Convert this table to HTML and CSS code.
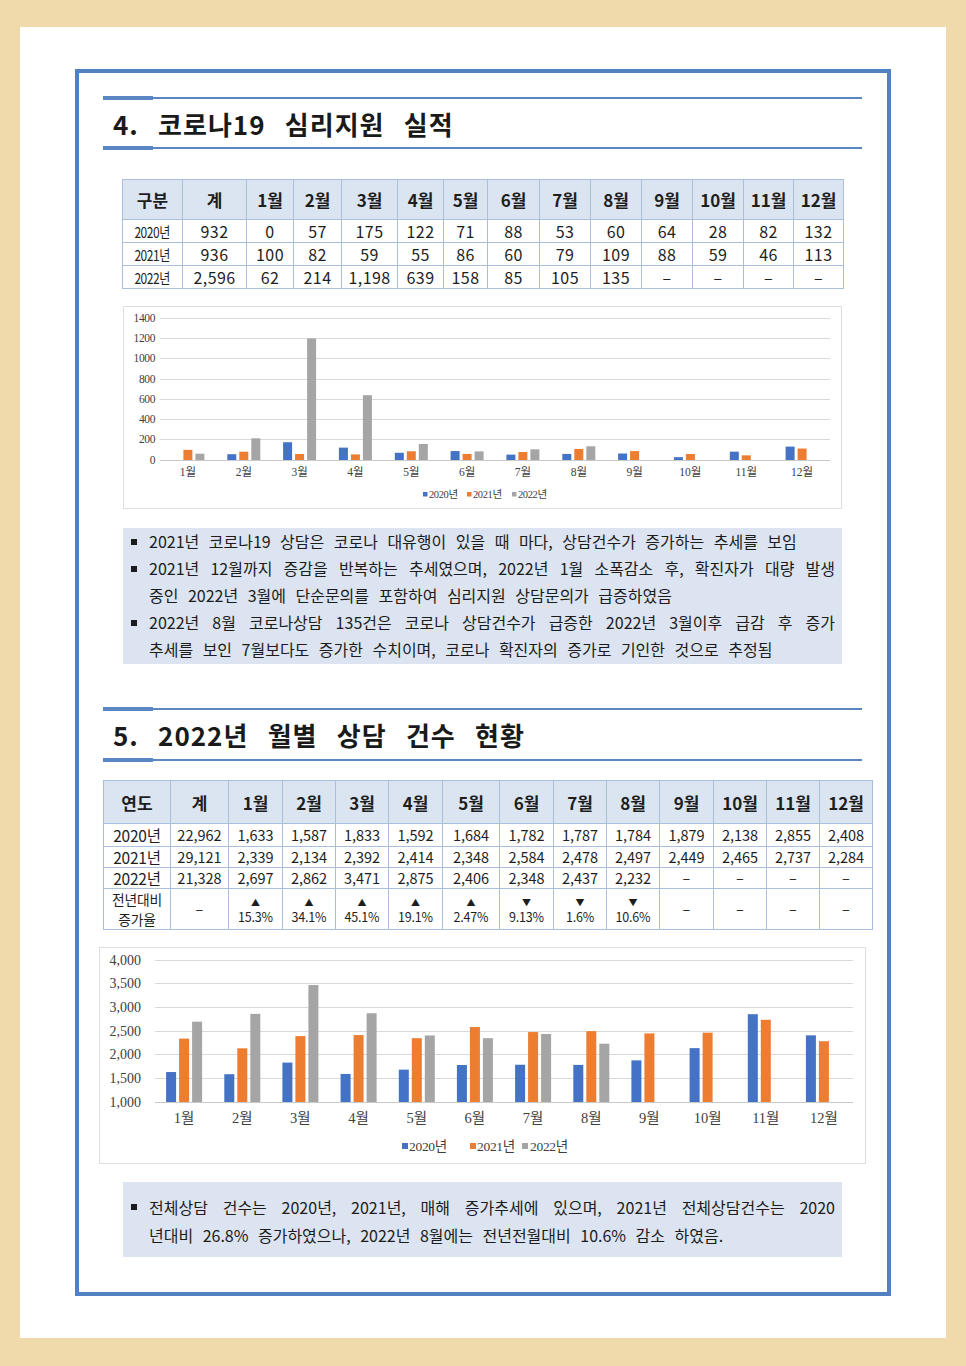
FILE: index.html
```html
<!DOCTYPE html>
<html lang="ko">
<head>
<meta charset="utf-8">
<title>코로나19 심리지원 실적</title>
<link rel="stylesheet" href="styles.css">
</head>
<body>
<div class="page">
<div class="frame">

  <section class="sec-head">
    <div class="rule"><span class="thick"></span><span class="thin"></span></div>
    <h2 class="title">4. 코로나19 심리지원 실적</h2>
    <div class="rule"><span class="thick"></span><span class="thin"></span></div>
  </section>

  <table class="tbl t1">
    <colgroup>
      <col class="w60"><col class="w64"><col class="w47"><col class="w48"><col class="w56"><col class="w46"><col class="w44">
      <col class="w52"><col class="w51"><col class="w51"><col class="w51"><col class="w51"><col class="w50"><col class="w50">
    </colgroup>
    <tr><th>구분</th><th>계</th><th>1월</th><th>2월</th><th>3월</th><th>4월</th><th>5월</th><th>6월</th><th>7월</th><th>8월</th><th>9월</th><th>10월</th><th>11월</th><th>12월</th></tr>
    <tr><td class="yr"><span>2020년</span></td><td>932</td><td>0</td><td>57</td><td>175</td><td>122</td><td>71</td><td>88</td><td>53</td><td>60</td><td>64</td><td>28</td><td>82</td><td>132</td></tr>
    <tr><td class="yr"><span>2021년</span></td><td>936</td><td>100</td><td>82</td><td>59</td><td>55</td><td>86</td><td>60</td><td>79</td><td>109</td><td>88</td><td>59</td><td>46</td><td>113</td></tr>
    <tr><td class="yr"><span>2022년</span></td><td>2,596</td><td>62</td><td>214</td><td>1,198</td><td>639</td><td>158</td><td>85</td><td>105</td><td>135</td><td>–</td><td>–</td><td>–</td><td>–</td></tr>
  </table>

  <div class="chart chart1">
    <svg width="717" height="201" viewBox="0 0 717 201">
      <g class="grid">
        <line x1="36" x2="706" y1="11.5" y2="11.5"/>
        <line x1="36" x2="706" y1="31.5" y2="31.5"/>
        <line x1="36" x2="706" y1="51.5" y2="51.5"/>
        <line x1="36" x2="706" y1="72.5" y2="72.5"/>
        <line x1="36" x2="706" y1="92.5" y2="92.5"/>
        <line x1="36" x2="706" y1="112.5" y2="112.5"/>
        <line x1="36" x2="706" y1="132.5" y2="132.5"/>
        <line class="axis" x1="36" x2="706" y1="153.5" y2="153.5"/>
      </g>
      <g class="ylab c1y">
        <text x="31" y="15">1400</text>
        <text x="31" y="35">1200</text>
        <text x="31" y="55">1000</text>
        <text x="31" y="76">800</text>
        <text x="31" y="96">600</text>
        <text x="31" y="116">400</text>
        <text x="31" y="136">200</text>
        <text x="31" y="157">0</text>
      </g>
      <g transform="matrix(1 0 0 -0.10143 0 153)">
        <g class="s20">
          <rect x="47.4" y="0" width="9" height="0"/>
          <rect x="103.3" y="0" width="9" height="57"/>
          <rect x="159.1" y="0" width="9" height="175"/>
          <rect x="214.9" y="0" width="9" height="122"/>
          <rect x="270.8" y="0" width="9" height="71"/>
          <rect x="326.6" y="0" width="9" height="88"/>
          <rect x="382.4" y="0" width="9" height="53"/>
          <rect x="438.3" y="0" width="9" height="60"/>
          <rect x="494.1" y="0" width="9" height="64"/>
          <rect x="549.9" y="0" width="9" height="28"/>
          <rect x="605.8" y="0" width="9" height="82"/>
          <rect x="661.6" y="0" width="9" height="132"/>
        </g>
        <g class="s21">
          <rect x="59.4" y="0" width="9" height="100"/>
          <rect x="115.3" y="0" width="9" height="82"/>
          <rect x="171.1" y="0" width="9" height="59"/>
          <rect x="226.9" y="0" width="9" height="55"/>
          <rect x="282.8" y="0" width="9" height="86"/>
          <rect x="338.6" y="0" width="9" height="60"/>
          <rect x="394.4" y="0" width="9" height="79"/>
          <rect x="450.3" y="0" width="9" height="109"/>
          <rect x="506.1" y="0" width="9" height="88"/>
          <rect x="561.9" y="0" width="9" height="59"/>
          <rect x="617.8" y="0" width="9" height="46"/>
          <rect x="673.6" y="0" width="9" height="113"/>
        </g>
        <g class="s22">
          <rect x="71.4" y="0" width="9" height="62"/>
          <rect x="127.3" y="0" width="9" height="214"/>
          <rect x="183.1" y="0" width="9" height="1198"/>
          <rect x="238.9" y="0" width="9" height="639"/>
          <rect x="294.8" y="0" width="9" height="158"/>
          <rect x="350.6" y="0" width="9" height="85"/>
          <rect x="406.4" y="0" width="9" height="105"/>
          <rect x="462.3" y="0" width="9" height="135"/>
        </g>
      </g>
      <g class="xlab c1x">
        <text x="63.9" y="169">1월</text>
        <text x="119.8" y="169">2월</text>
        <text x="175.6" y="169">3월</text>
        <text x="231.4" y="169">4월</text>
        <text x="287.3" y="169">5월</text>
        <text x="343.1" y="169">6월</text>
        <text x="398.9" y="169">7월</text>
        <text x="454.8" y="169">8월</text>
        <text x="510.6" y="169">9월</text>
        <text x="566.4" y="169">10월</text>
        <text x="622.3" y="169">11월</text>
        <text x="678.1" y="169">12월</text>
      </g>
      <g class="legend c1l">
        <rect class="b" x="299" y="185" width="4.5" height="4.5"/>
        <text x="305" y="191">2020년</text>
        <rect class="o" x="343" y="185" width="4.5" height="4.5"/>
        <text x="349" y="191">2021년</text>
        <rect class="g" x="388" y="185" width="4.5" height="4.5"/>
        <text x="394" y="191">2022년</text>
      </g>
    </svg>
  </div>

  <div class="note note1">
    <div class="item">
      <span class="sq"></span>
      <div class="txt"><div class="ln">2021년 코로나19 상담은 코로나 대유행이 있을 때 마다, 상담건수가 증가하는 추세를 보임</div></div>
    </div>
    <div class="item">
      <span class="sq"></span>
      <div class="txt">
        <div class="ln jl">2021년 12월까지 증감을 반복하는 추세였으며, 2022년 1월 소폭감소 후, 확진자가 대량 발생</div>
        <div class="ln">중인 2022년 3월에 단순문의를 포함하여 심리지원 상담문의가 급증하였음</div>
      </div>
    </div>
    <div class="item">
      <span class="sq"></span>
      <div class="txt">
        <div class="ln jl">2022년 8월 코로나상담 135건은 코로나 상담건수가 급증한 2022년 3월이후 급감 후 증가</div>
        <div class="ln">추세를 보인 7월보다도 증가한 수치이며, 코로나 확진자의 증가로 기인한 것으로 추정됨</div>
      </div>
    </div>
  </div>

  <section class="sec-head sec5">
    <div class="rule"><span class="thick"></span><span class="thin"></span></div>
    <h2 class="title">5. 2022년 월별 상담 건수 현황</h2>
    <div class="rule"><span class="thick"></span><span class="thin"></span></div>
  </section>

  <table class="tbl t2">
    <colgroup>
      <col class="w67"><col class="w58"><col class="w54"><col class="w53"><col class="w53"><col class="w54"><col class="w57">
      <col class="w54"><col class="w53"><col class="w53"><col class="w54"><col class="w53"><col class="w53"><col class="w53">
    </colgroup>
    <tr><th>연도</th><th>계</th><th>1월</th><th>2월</th><th>3월</th><th>4월</th><th>5월</th><th>6월</th><th>7월</th><th>8월</th><th>9월</th><th>10월</th><th>11월</th><th>12월</th></tr>
    <tr class="r1"><td class="yr">2020년</td><td>22,962</td><td>1,633</td><td>1,587</td><td>1,833</td><td>1,592</td><td>1,684</td><td>1,782</td><td>1,787</td><td>1,784</td><td>1,879</td><td>2,138</td><td>2,855</td><td>2,408</td></tr>
    <tr><td class="yr">2021년</td><td>29,121</td><td>2,339</td><td>2,134</td><td>2,392</td><td>2,414</td><td>2,348</td><td>2,584</td><td>2,478</td><td>2,497</td><td>2,449</td><td>2,465</td><td>2,737</td><td>2,284</td></tr>
    <tr><td class="yr">2022년</td><td>21,328</td><td>2,697</td><td>2,862</td><td>3,471</td><td>2,875</td><td>2,406</td><td>2,348</td><td>2,437</td><td>2,232</td><td>–</td><td>–</td><td>–</td><td>–</td></tr>
    <tr class="chg">
      <td class="lbl"><span class="l1">전년대비</span><span class="l2">증가율</span></td>
      <td>–</td>
      <td><span class="tri">▲</span><span class="pct">15.3%</span></td>
      <td><span class="tri">▲</span><span class="pct">34.1%</span></td>
      <td><span class="tri">▲</span><span class="pct">45.1%</span></td>
      <td><span class="tri">▲</span><span class="pct">19.1%</span></td>
      <td><span class="tri">▲</span><span class="pct">2.47%</span></td>
      <td><span class="tri">▼</span><span class="pct">9.13%</span></td>
      <td><span class="tri">▼</span><span class="pct">1.6%</span></td>
      <td><span class="tri">▼</span><span class="pct">10.6%</span></td>
      <td>–</td><td>–</td><td>–</td><td>–</td>
    </tr>
  </table>

  <div class="chart chart2">
    <svg width="765" height="215" viewBox="0 0 765 215">
      <g class="grid">
        <line x1="55" x2="753" y1="12.5" y2="12.5"/>
        <line x1="55" x2="753" y1="35.5" y2="35.5"/>
        <line x1="55" x2="753" y1="59.5" y2="59.5"/>
        <line x1="55" x2="753" y1="83.5" y2="83.5"/>
        <line x1="55" x2="753" y1="106.5" y2="106.5"/>
        <line x1="55" x2="753" y1="130.5" y2="130.5"/>
        <line class="axis" x1="55" x2="753" y1="154.5" y2="154.5"/>
      </g>
      <g class="ylab c2y">
        <text x="41" y="17">4,000</text>
        <text x="41" y="40">3,500</text>
        <text x="41" y="64">3,000</text>
        <text x="41" y="88">2,500</text>
        <text x="41" y="111">2,000</text>
        <text x="41" y="135">1,500</text>
        <text x="41" y="159">1,000</text>
      </g>
      <g transform="matrix(1 0 0 -0.047333 0 201.33)">
        <g class="s20">
          <rect x="66.1" y="1000" width="10" height="633"/>
          <rect x="124.3" y="1000" width="10" height="587"/>
          <rect x="182.4" y="1000" width="10" height="833"/>
          <rect x="240.6" y="1000" width="10" height="592"/>
          <rect x="298.8" y="1000" width="10" height="684"/>
          <rect x="356.9" y="1000" width="10" height="782"/>
          <rect x="415.1" y="1000" width="10" height="787"/>
          <rect x="473.3" y="1000" width="10" height="784"/>
          <rect x="531.4" y="1000" width="10" height="879"/>
          <rect x="589.6" y="1000" width="10" height="1138"/>
          <rect x="647.8" y="1000" width="10" height="1855"/>
          <rect x="705.9" y="1000" width="10" height="1408"/>
        </g>
        <g class="s21">
          <rect x="79.1" y="1000" width="10" height="1339"/>
          <rect x="137.3" y="1000" width="10" height="1134"/>
          <rect x="195.4" y="1000" width="10" height="1392"/>
          <rect x="253.6" y="1000" width="10" height="1414"/>
          <rect x="311.8" y="1000" width="10" height="1348"/>
          <rect x="369.9" y="1000" width="10" height="1584"/>
          <rect x="428.1" y="1000" width="10" height="1478"/>
          <rect x="486.3" y="1000" width="10" height="1497"/>
          <rect x="544.4" y="1000" width="10" height="1449"/>
          <rect x="602.6" y="1000" width="10" height="1465"/>
          <rect x="660.8" y="1000" width="10" height="1737"/>
          <rect x="718.9" y="1000" width="10" height="1284"/>
        </g>
        <g class="s22">
          <rect x="92.1" y="1000" width="10" height="1697"/>
          <rect x="150.3" y="1000" width="10" height="1862"/>
          <rect x="208.4" y="1000" width="10" height="2471"/>
          <rect x="266.6" y="1000" width="10" height="1875"/>
          <rect x="324.8" y="1000" width="10" height="1406"/>
          <rect x="382.9" y="1000" width="10" height="1348"/>
          <rect x="441.1" y="1000" width="10" height="1437"/>
          <rect x="499.3" y="1000" width="10" height="1232"/>
        </g>
      </g>
      <g class="xlab c2x">
        <text x="84.1" y="175">1월</text>
        <text x="142.3" y="175">2월</text>
        <text x="200.4" y="175">3월</text>
        <text x="258.6" y="175">4월</text>
        <text x="316.8" y="175">5월</text>
        <text x="374.9" y="175">6월</text>
        <text x="433.1" y="175">7월</text>
        <text x="491.3" y="175">8월</text>
        <text x="549.4" y="175">9월</text>
        <text x="607.6" y="175">10월</text>
        <text x="665.8" y="175">11월</text>
        <text x="723.9" y="175">12월</text>
      </g>
      <g class="legend c2l">
        <rect class="b" x="302" y="195" width="6" height="6"/>
        <text x="309" y="203">2020년</text>
        <rect class="o" x="370" y="195" width="6" height="6"/>
        <text x="377" y="203">2021년</text>
        <rect class="g" x="422" y="195" width="6" height="6"/>
        <text x="430" y="203">2022년</text>
      </g>
    </svg>
  </div>

  <div class="note note2">
    <div class="item">
      <span class="sq"></span>
      <div class="txt">
        <div class="ln jl">전체상담 건수는 2020년, 2021년, 매해 증가추세에 있으며, 2021년 전체상담건수는 2020</div>
        <div class="ln">년대비 26.8% 증가하였으나, 2022년 8월에는 전년전월대비 10.6% 감소 하였음.</div>
      </div>
    </div>
  </div>

</div>
</div>
</body>
</html>
```

FILE: styles.css
```css
* { box-sizing: border-box; }

body {
  margin: 0;
  padding: 27px 20px 28px;
  background: #F0D9AB;
  font-family: "Noto Sans CJK KR", "Noto Sans", sans-serif;
  color: #1c1c1c;
}

.page {
  background: #ffffff;
  height: 1311px;
  padding: 42px 55px;
}

.frame {
  border: 4px solid #5281C1;
  height: 1227px;
  overflow: hidden;
}

/* ---------- section headings ---------- */
.sec-head {
  margin: 23px 25px 0 24px;
}
.sec5 { margin-top: 43px; }

.rule {
  display: flex;
  align-items: center;
  height: 4px;
}
.rule .thick {
  width: 50px;
  height: 4px;
  background: #5A86C3;
}
.rule .thin {
  flex: 1;
  height: 2px;
  background: #5A86C3;
}

.title {
  margin: 0;
  height: 46px;
  display: flex;
  align-items: center;
  padding-left: 10px;
  font-size: 26px;
  font-weight: 700;
  letter-spacing: 1px;
  word-spacing: 11px;
  color: #1a1a1a;
}
.sec5 .title { height: 47px; }

/* ---------- tables ---------- */
.tbl {
  border-collapse: collapse;
  table-layout: fixed;
}
.tbl th,
.tbl td {
  border: 1px solid #A9BFDD;
  text-align: center;
  vertical-align: middle;
  padding: 0;
  white-space: nowrap;
  color: #1e1e1e;
}
.tbl th {
  background: #DBE5F1;
  font-weight: 700;
  font-size: 17px;
}

.w44 { width: 44px; } .w46 { width: 46px; } .w47 { width: 47px; }
.w48 { width: 48px; } .w50 { width: 50px; } .w51 { width: 51px; }
.w52 { width: 52px; } .w53 { width: 53px; } .w54 { width: 54px; }
.w56 { width: 56px; } .w57 { width: 57px; } .w58 { width: 58px; }
.w60 { width: 60px; } .w64 { width: 64px; } .w67 { width: 67px; }

.t1 {
  margin: 29px 0 0 43px;
  width: 721px;
}
.t1 th { height: 40px; }
.t1 td {
  height: 23px;
  font-size: 16px;
  letter-spacing: 0.4px;
  line-height: 20px;
}
.t1 td.yr span {
  display: inline-block;
  font-size: 15px;
  letter-spacing: -0.6px;
  transform: scaleX(0.8);
}

.t2 {
  margin: 18px 0 0 24px;
  width: 769px;
}
.t2 th { height: 43px; }
.t2 td {
  height: 21px;
  font-size: 14.5px;
  line-height: 18px;
}
.t2 tr.r1 td { height: 23px; }
.t2 td.yr { font-size: 15.5px; letter-spacing: -0.2px; }
.t2 tr.chg td { height: 40px; }
.t2 td.lbl {
  font-size: 13.8px;
  line-height: 20px;
  letter-spacing: -0.2px;
}
.lbl .l1,
.lbl .l2 {
  display: block;
}
.tri {
  display: block;
  font-size: 9px;
  line-height: 11px;
  margin-top: 2px;
}
.pct {
  display: block;
  font-size: 12.5px;
  line-height: 14px;
  margin-top: 2px;
  letter-spacing: -0.2px;
}

/* ---------- charts ---------- */
.chart {
  border: 1px solid #DEDEDE;
  background: #fff;
}
.chart svg { display: block; }
.chart1 {
  margin: 17px 0 0 44px;
  width: 719px;
  height: 203px;
}
.chart2 {
  margin: 17px 0 0 20px;
  width: 767px;
  height: 217px;
}

.grid line { stroke: #D9D9D9; stroke-width: 1; }
.grid line.axis { stroke: #C9C9C9; }

.ylab text,
.xlab text,
.legend text {
  font-family: "Liberation Serif", "Noto Sans CJK KR", serif;
  fill: #404040;
}
.ylab text { text-anchor: end; }
.xlab text { text-anchor: middle; }

.c1y text { font-size: 11.5px; letter-spacing: -0.4px; }
.c1x text { font-size: 11.5px; }
.c1l text { font-size: 10.5px; letter-spacing: -0.4px; }
.c2y text { font-size: 14px; }
.c2x text { font-size: 14.5px; }
.c2l text { font-size: 13.5px; letter-spacing: -0.3px; }

.s20 rect, .legend .b { fill: #4472C4; }
.s21 rect, .legend .o { fill: #ED7D31; }
.s22 rect, .legend .g { fill: #A5A5A5; }

/* ---------- notes ---------- */
.note {
  margin-left: 44px;
  width: 719px;
  background: #DBE4F0;
  padding: 0 7px 0 8px;
  font-size: 16px;
  line-height: 27px;
  word-spacing: 5px;
  color: #1c1c1c;
}
.note1 {
  margin-top: 19px;
  height: 136px;
}
.note2 {
  margin-top: 18px;
  height: 75px;
  padding-top: 11px;
  line-height: 28px;
}
.item {
  display: flex;
}
.sq {
  flex: 0 0 18px;
  position: relative;
}
.sq::before {
  content: "";
  position: absolute;
  left: 0;
  top: 11px;
  width: 6px;
  height: 6px;
  background: #1c1c1c;
}
.txt { flex: 1; }
.ln { white-space: nowrap; }
.ln.jl {
  text-align: justify;
  text-align-last: justify;
  white-space: normal;
}
```
